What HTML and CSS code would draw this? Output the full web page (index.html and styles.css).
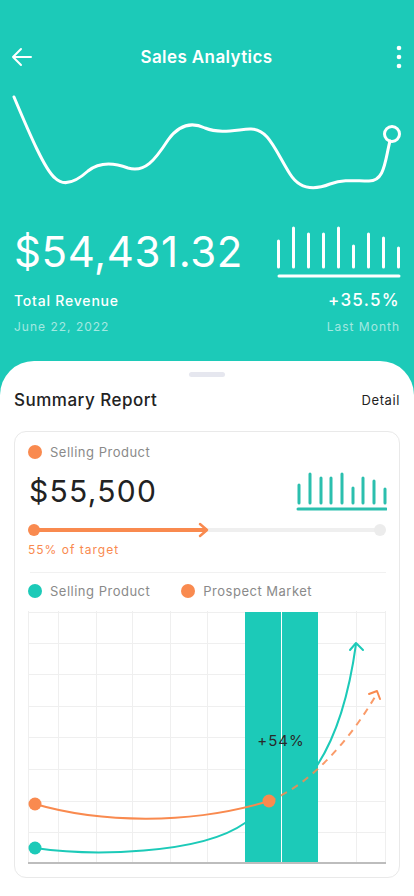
FILE: index.html
```html
<!DOCTYPE html>
<html>
<head>
<meta charset="utf-8">
<link rel="stylesheet" href="styles.css">
</head>
<body>
<div class="hero">
  <div class="topbar">
    <svg class="icon" width="24" height="24" viewBox="0 0 24 24"><path d="M21 12H3M11 4l-8 8 8 8" fill="none" stroke="#fff" stroke-width="2" stroke-linecap="round" stroke-linejoin="round"/></svg>
    <h1 class="title">Sales Analytics</h1>
    <svg class="icon dots" width="8" height="24" viewBox="0 0 8 24"><circle cx="4" cy="3" r="2.3" fill="#fff"/><circle cx="4" cy="12" r="2.3" fill="#fff"/><circle cx="4" cy="21" r="2.3" fill="#fff"/></svg>
  </div>
  <svg class="wave" width="414" height="112" viewBox="0 84 414 112">
    <path d="M14 97 C 30 135, 45 170, 55 178 C 65 188, 78 180, 88 171 C 98 163, 112 162, 128 168 C 145 173, 155 160, 168 140 C 178 126, 190 121, 205 128 C 220 134, 235 130, 250 129 C 268 128, 275 150, 290 174 C 300 190, 315 190, 330 184 C 345 179, 355 181, 368 181 C 385 182, 385 160, 390 141" fill="none" stroke="#fff" stroke-width="3" stroke-linecap="round"/>
    <circle cx="392" cy="134" r="7.5" fill="none" stroke="#fff" stroke-width="3"/>
  </svg>
  <div class="stats">
    <div class="stat-main">
      <div class="big">$54,431.32</div>
      <svg class="hbars" width="124" height="54" viewBox="277 224 124 54">
        <g stroke="#fff" stroke-width="3" stroke-linecap="round">
          <path d="M278.5 239V265M293.5 226V265M308.5 232V265M323.5 232V265M338.5 226V265M353.5 244V265M368.5 232V265M383.5 236V265M398.5 246V265"/>
          <path d="M279 274H399"/>
        </g>
      </svg>
    </div>
    <div class="row row-label">
      <span class="lab">Total Revenue</span>
      <span class="pct">+35.5%</span>
    </div>
    <div class="row row-sub">
      <span>June 22, 2022</span>
      <span>Last Month</span>
    </div>
  </div>
</div>
<div class="sheet">
  <div class="handle"></div>
  <div class="sheet-head">
    <h2 class="sheet-title">Summary Report</h2>
    <span class="detail">Detail</span>
  </div>
  <div class="card">
    <div class="legend-item"><span class="dot orange"></span><span>Selling Product</span></div>
    <div class="amount-row">
      <div class="amount">$55,500</div>
      <svg class="mbars" width="92" height="40" viewBox="295 470 92 40">
        <g stroke="#2bbfae" stroke-width="3" stroke-linecap="round">
          <path d="M299 484V502M310 473V502M321 477V502M331 477V502M342 473V502M353 487V502M363 477V502M374 480V502M385 488V502"/>
          <path d="M298 508H386"/>
        </g>
      </svg>
    </div>
    <svg class="progress" width="362" height="16" viewBox="26 521 362 16">
      <path d="M34 529H380" stroke="#efefef" stroke-width="4" stroke-linecap="round"/>
      <circle cx="380" cy="529" r="6" fill="#ececec"/>
      <path d="M34 529H207" stroke="#f98a4f" stroke-width="4"/>
      <path d="M200 523L207 529L200 535" fill="none" stroke="#f98a4f" stroke-width="2.5" stroke-linecap="round" stroke-linejoin="round"/>
      <circle cx="34" cy="529" r="6" fill="#f98a4f"/>
    </svg>
    <div class="target">55% of target</div>
    <div class="sep"></div>
    <div class="legend">
      <div class="legend-item"><span class="dot teal"></span><span>Selling Product</span></div>
      <div class="legend-item"><span class="dot orange"></span><span>Prospect Market</span></div>
    </div>
    <svg class="chart" width="358" height="254" viewBox="28 611 358 254">
      <g stroke="#efefef" stroke-width="1">
        <path d="M28.5 611V863M58.5 611V863M96.5 611V863M132.5 611V863M170.5 611V863M207.5 611V863M356.5 611V863M385.5 611V863"/>
        <path d="M28 612.5H386M28 643.5H386M28 674.5H386M28 706.5H386M28 737.5H386M28 769.5H386M28 801.5H386M28 832.5H386"/>
      </g>
      <path d="M35 848 C 90 856, 200 855, 245 823 C 300 800, 340 760, 356 644" fill="none" stroke="#1ccab8" stroke-width="2"/>
      <path d="M350 650L356 643L363 650" fill="none" stroke="#1ccab8" stroke-width="2" stroke-linecap="round" stroke-linejoin="round"/>
      <rect x="245" y="612" width="73" height="251" fill="#1ccab8"/>
      <path d="M281.5 612V863" stroke="#fff" stroke-width="1"/>
      <path d="M35 804 C 100 823, 190 825, 269 801" fill="none" stroke="#f98a4f" stroke-width="2"/>
      <path d="M269 801 C 310 785, 350 740, 376 695" fill="none" stroke="#f98a4f" stroke-width="2" stroke-dasharray="7 6" opacity="0.85"/>
      <path d="M369 694L377 691L380 699" fill="none" stroke="#f98a4f" stroke-width="2" stroke-linecap="round" stroke-linejoin="round"/>
      <circle cx="35" cy="848" r="6.5" fill="#1ccab8"/>
      <circle cx="35" cy="804" r="6.5" fill="#f98a4f"/>
      <circle cx="269" cy="801" r="6.5" fill="#f98a4f"/>
      <path d="M28 863H386" stroke="#bdbdbd" stroke-width="2"/>
      <text x="281" y="746" text-anchor="middle" class="chart-label">+54%</text>
    </svg>
  </div>
</div>
</body>
</html>
```

FILE: styles.css
```css
* { box-sizing: border-box; margin: 0; padding: 0; }
html, body { width: 414px; height: 896px; overflow: hidden; }
body {
  background: #1ccab8;
  font-family: Inter, "Noto Sans", sans-serif;
  color: #222;
  display: flex;
  flex-direction: column;
}
.hero { color: #fff; flex: none; }
.topbar {
  margin-top: 40px;
  height: 34px;
  padding: 0 11px 0 10px;
  display: grid;
  grid-template-columns: 1fr auto 1fr;
  align-items: center;
}
.icon { display: block; }
.dots { justify-self: end; }
.title {
  font-size: 17px;
  font-weight: 600;
  letter-spacing: 0.4px;
  color: #fff;
}
.wave { display: block; margin-top: 10px; }
.stats { padding: 0 14px; }
.stat-main {
  display: flex;
  justify-content: space-between;
  align-items: flex-start;
  height: 90px;
  margin-right: -1px;
}
.big {
  font-size: 42px;
  font-weight: 400;
  line-height: 42px;
  letter-spacing: 0.6px;
  margin-top: 35px;
}
.hbars { display: block; margin-top: 30px; }
.row { display: flex; justify-content: space-between; }
.row-label { height: 24px; margin-top: 2px; align-items: center; }
.lab { font-size: 14px; font-weight: 500; letter-spacing: 0.8px; }
.pct { font-size: 17px; font-weight: 500; letter-spacing: 1.3px; }
.row-sub {
  height: 26px;
  padding-top: 2px;
  align-items: center;
  font-size: 12px;
  letter-spacing: 1px;
  color: rgba(255,255,255,0.6);
}
.sheet {
  margin-top: 23px;
  background: #fff;
  border-radius: 34px 34px 0 0;
  flex: 1;
  padding: 11px 14px 0;
}
.handle {
  width: 36px;
  height: 5px;
  border-radius: 3px;
  background: #e6e7ef;
  margin: 0 auto;
}
.sheet-head {
  display: flex;
  justify-content: space-between;
  align-items: center;
  height: 40px;
  margin-top: 3px;
}
.sheet-title { font-size: 17px; font-weight: 500; letter-spacing: 0.5px; color: #222; }
.detail { font-size: 13px; letter-spacing: 0.6px; color: #222; }
.card {
  margin-top: 11px;
  border: 1px solid #e9e9e9;
  border-radius: 12px;
  padding: 12px 13px 0;
  height: 447px;
}
.legend-item {
  display: flex;
  align-items: center;
  gap: 8px;
  font-size: 13px;
  letter-spacing: 0.5px;
  color: #8a8a8a;
  height: 16px;
}
.dot { width: 14px; height: 14px; border-radius: 50%; display: block; }
.orange { background: #f98a4f; }
.teal { background: #1ccab8; }
.amount-row {
  display: flex;
  justify-content: space-between;
  align-items: flex-start;
  height: 62px;
}
.amount {
  font-size: 30px;
  line-height: 30px;
  letter-spacing: 1.3px;
  color: #222;
  margin-top: 16px;
  margin-left: 1px;
}
.mbars { display: block; margin-top: 11px; margin-right: -1px; }
.progress { display: block; margin-left: -2px; }
.target {
  font-size: 12px;
  letter-spacing: 1px;
  color: #f98a4f;
  height: 20px;
  line-height: 24px;
}
.sep { height: 1px; background: #f1f1f1; margin: 14px 0 0 2px; }
.legend { display: flex; gap: 31px; margin-top: 10px; }
.chart { display: block; margin-top: 12px; overflow: visible; }
.chart-label { font-family: Inter, sans-serif; font-size: 15px; letter-spacing: 1px; fill: #2a2a2a; }
```
